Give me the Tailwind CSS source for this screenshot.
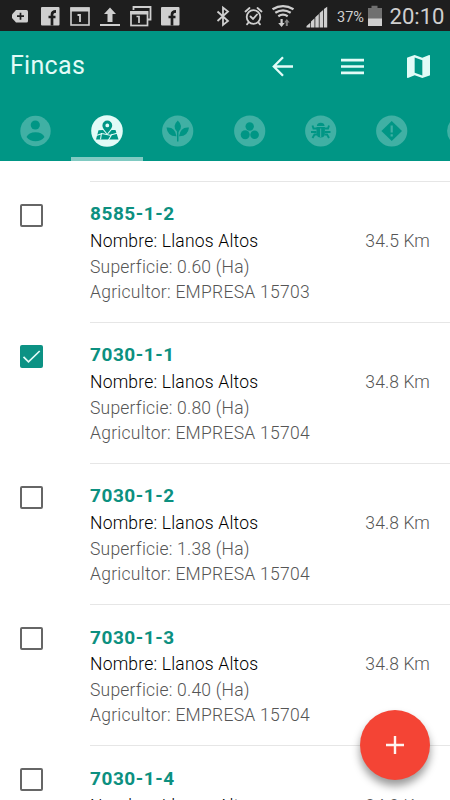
<!DOCTYPE html>
<html lang="es">
<head>
<meta charset="utf-8">
<title>Fincas</title>
<script src="https://cdn.jsdelivr.net/npm/@tailwindcss/browser@4"></script>
</head>
<body class="bg-white">
<div class="relative flex h-[800px] w-[450px] flex-col overflow-hidden bg-white font-['Roboto',sans-serif]">
  <!-- Status bar -->
  <div class="h-[31px] shrink-0 bg-[#1e1e1e]">
    <svg class="block h-[31px] w-[450px]" viewBox="0 0 450 31" fill="#cfcfcf">
      <path d="M16 10h10.500q1.500 0 1.500 1.500v9.500q0 1.500-1.500 1.500H16l-4-4.500v-3.500z"/>
      <path d="M20.500 12.700v7M17 16.200h7" stroke="#1e1e1e" stroke-width="1.700"/>
      <g id="fb"><rect x="41" y="7" width="18.500" height="18.500" rx="1"/><path d="M52 25.500v-11q0-3.200 4-3.200M48.500 17h7" fill="none" stroke="#1e1e1e" stroke-width="2.700"/></g>
      <rect x="71" y="8" width="18" height="17" fill="none" stroke="#cfcfcf" stroke-width="1.600"/><rect x="70.500" y="7.500" width="19" height="4"/>
      <path d="M77.500 15h2.500v7" fill="none" stroke="#cfcfcf" stroke-width="1.800"/>
      <path d="M110 7.500l6 6.500h-3.500v8h-5v-8H104zM100 24h20v2h-20z"/>
      <path d="M133.500 10V7h17V19.500H148" fill="none" stroke="#cfcfcf" stroke-width="1.800"/>
      <rect x="131" y="12" width="16.500" height="13.500" fill="none" stroke="#cfcfcf" stroke-width="1.700"/><rect x="130.200" y="11" width="18" height="3.500"/>
      <path d="M136.500 16.500h2.500v6.500" fill="none" stroke="#cfcfcf" stroke-width="1.700"/>
      <use href="#fb" x="120"/>
      <path d="M217.500 11.500l10.500 9.500-5 4V7.500l5 4-10.500 9.500" fill="none" stroke="#cfcfcf" stroke-width="1.800"/>
      <g fill="none" stroke="#cfcfcf" stroke-width="1.800" stroke-linecap="round">
        <circle cx="253.500" cy="17" r="6.800"/><path d="M250.500 16.500l2.500 2.500 4-4.500M245.500 11.500l4-3.500M261.500 11.500l-4-3.500M248.500 22.500l-1.500 1.800M258.500 22.500l1.500 1.800"/>
      </g>
      <g fill="none" stroke="#cfcfcf" stroke-width="2.300">
        <path d="M272.500 9.300q10.500-6.500 21 0M275.300 12.800q7.700-5 15.400 0M278.300 16.200q4.700-3 9.400 0"/>
      </g>
      <path d="M280.500 19h2.200v4h2L281.600 27l-3.400-4h2.300z"/><path fill="#858585" d="M285.800 26h2v-3.500h1.800L286.800 19l-2.600 3.500h1.600z"/>
      <path d="M306.500 27.500v-1.500l3.800-3.200v4.700zM311 27.500v-6l3.500-3.200v9.200zM315.300 27.500v-10.200l3.500-3.200v13.400zM319.600 27.500v-14.500l3.500-3v17.500zM323.900 27.500V9l3.300-2.300v20.800z"/>
      <path fill="#707070" d="M368 8h3.500V5.800h6V8h4.500v11h-14z"/><path d="M368 18.500h14v7.500h-14z"/>
      <text x="337" y="22" font-size="14.500" textLength="27" lengthAdjust="spacingAndGlyphs">37%</text>
      <text x="389.500" y="24" font-size="22" textLength="55" lengthAdjust="spacingAndGlyphs">20:10</text>
    </svg>
  </div>

  <!-- App bar -->
  <header class="flex h-[130px] shrink-0 flex-col bg-[#009685] text-[#e2fbf7]">
    <div class="flex h-[70px] items-center pl-[10px] pr-[20px]">
      <h1 class="flex-1 text-[25px] leading-[30px] tracking-[0.3px]">Fincas</h1>
      <svg class="mr-[48px] h-[21px] w-[22px]" viewBox="0 0 22 21" fill="none" stroke="currentColor" stroke-width="2.300"><path d="M22 10.500H3M12 1.300l-9.200 9.200 9.200 9.200"/></svg>
      <svg class="mr-[43px] h-[17px] w-[23px]" viewBox="0 0 23 17" fill="currentColor"><path d="M0 .8h23v2.600H0zM0 7.200h23v2.600H0zM0 13.600h23v2.600H0z"/></svg>
      <svg class="h-[23px] w-[23px]" viewBox="3 3 18 18" fill="currentColor"><path d="M20.500 3l-.16.03L15 5.100 9 3 3.360 4.900c-.21.070-.36.250-.36.480V20.500c0 .28.220.5.500.5l.16-.03L9 18.900l6 2.100 5.640-1.900c.21-.07.360-.25.360-.48V3.500c0-.28-.22-.5-.5-.5zM15 19l-6-2.110V5l6 2.110V19z"/></svg>
    </div>
    <nav class="flex h-[60px] overflow-hidden text-[#40b0a4]">
      <div class="flex w-[71.300px] shrink-0 items-center justify-center">
        <svg class="h-[32px] w-[32px]" viewBox="0 0 32 32"><circle cx="15.500" cy="16" r="15.200" fill="currentColor"/><g fill="#009685"><circle cx="15.300" cy="10" r="4.600"/><path d="M6.500 22q2-4.800 9-4.800t9 4.800q-3.500 4.300-9 4.300T6.500 22z"/></g></svg>
      </div>
      <div class="flex w-[71.300px] shrink-0 items-center justify-center border-b-4 border-[#80cac2] pt-1 text-[#e2fbf7]">
        <svg class="h-[32px] w-[32px]" viewBox="0 0 32 32"><circle cx="16" cy="16" r="15.800" fill="currentColor"/><g fill="#009685"><path fill-rule="evenodd" d="M16.300 5.500a4.900 4.900 0 0 1 4.900 4.900c0 3-2.700 5-4.900 8.300-2.200-3.300-4.900-5.300-4.900-8.300a4.900 4.900 0 0 1 4.900-4.900zm0 3a1.900 1.900 0 1 0 0 3.800 1.900 1.900 0 0 0 0-3.800z"/><path d="M7.500 15.200l4.500-.2 4.300 5 4.300-5h3.900l3 9.500H5z"/></g><path d="M6 20.200l5-1.700 8 1.800 7-2M10.500 18l-1 6.500M17.500 25l3.500-6" fill="none" stroke="currentColor" stroke-width="1.100"/></svg>
      </div>
      <div class="flex w-[71.300px] shrink-0 items-center justify-center">
        <svg class="h-[32px] w-[32px]" viewBox="0 0 32 32"><circle cx="15.700" cy="16" r="15.600" fill="currentColor"/><g fill="#009685"><path d="M15.800 5.500q6.500 6 .5 11.500h-1q-6-5.500.5-11.500z"/><path d="M4.500 12.500q8.500-1 10 8.700Q5.500 21.500 4.500 12.500zM27 12.500q-8.500-1-10 8.700Q26 21.500 27 12.500z"/><path d="M15 16h1.500v10.500H15z"/></g></svg>
      </div>
      <div class="flex w-[71.300px] shrink-0 items-center justify-center">
        <svg class="h-[32px] w-[32px]" viewBox="0 0 32 32"><circle cx="15.700" cy="16" r="15.600" fill="currentColor"/><g fill="#009685"><circle cx="15.700" cy="11.500" r="4.200"/><circle cx="11.200" cy="19.800" r="4.500"/><circle cx="20.600" cy="19.800" r="4.300"/></g></svg>
      </div>
      <div class="flex w-[71.300px] shrink-0 items-center justify-center">
        <svg class="h-[32px] w-[32px]" viewBox="0 0 32 32"><circle cx="15.700" cy="16" r="15.600" fill="currentColor"/><g fill="#009685"><path d="M11.800 11q.4-3.300 3.900-3.300t3.900 3.300z"/><path d="M11.500 12h8.400v6q0 4.500-4.200 4.500T11.500 18z"/></g><path d="M12 13.500H8.500L7.500 10.500M19.500 13.500h3.500l1-3M11.500 17H6M20 17h5.500M12 19.500H9.500l-2 3.500M19.500 19.500H22l2 3.500" fill="none" stroke="#009685" stroke-width="1.900"/><path d="M15.700 13.500v8.500" stroke="currentColor" stroke-width="1"/></svg>
      </div>
      <div class="flex w-[71.300px] shrink-0 items-center justify-center">
        <svg class="h-[32px] w-[32px]" viewBox="0 0 32 32"><circle cx="15.700" cy="16" r="15.600" fill="currentColor"/><path fill="#009685" d="M15.700 6L26 16 15.700 26 5.400 16z"/><path d="M14.600 10.500h2.200v7h-2.200zM14.600 19.300h2.200v2.200h-2.200z" fill="currentColor"/></svg>
      </div>
      <div class="flex w-[71.300px] shrink-0 items-center justify-center">
        <svg class="h-[32px] w-[32px]" viewBox="0 0 32 32"><circle cx="15.700" cy="16" r="15.600" fill="currentColor"/></svg>
      </div>
    </nav>
  </header>

  <!-- List -->
  <main id="list" class="flex flex-col pt-[19.600px]"></main>

  <button class="absolute left-[360px] top-[710px] flex h-[70px] w-[70px] items-center justify-center rounded-full bg-[#f44435] shadow-[0_6px_9px_rgba(0,0,0,0.4)]" aria-label="Agregar">
    <svg class="h-[18px] w-[18px]" viewBox="0 0 18 18" fill="none" stroke="#fff4f0" stroke-width="2.400"><path d="M9 0v18M0 9h18"/></svg>
  </button>
</div>
<script>
const farms = [
  ['8585-1-2', '0.60', '15703', '34.5', false],
  ['7030-1-1', '0.80', '15704', '34.8', true],
  ['7030-1-2', '1.38', '15704', '34.8', false],
  ['7030-1-3', '0.40', '15704', '34.8', false],
  ['7030-1-4', '0.40', '15704', '34.8', false],
];
const empty = '<span class="block h-[23px] w-[23px] rounded-[2px] border-[2px] border-[#666]"></span>';
const checked = '<span class="block h-[23px] w-[23px] rounded-[2px] bg-[#0c9284]"><svg class="block h-[23px] w-[23px]" viewBox="0 0 23 23" fill="none" stroke="#e2fbf7" stroke-width="1.700"><path d="M3.500 11.800l5 5L19.700 6"/></svg></span>';
document.getElementById('list').innerHTML = farms.map(([id, area, company, km, on]) => `
  <article class="flex h-[141.200px] shrink-0 pl-[20px]">
    <div class="w-[70px] shrink-0 pt-[23px]">${on ? checked : empty}</div>
    <div class="flex flex-1 flex-col whitespace-nowrap border-t border-[#e6e6e6] pr-[20px] pt-[18.500px]">
      <h2 class="text-[19px] font-bold leading-[27px] tracking-[0.550px] text-[#0c9080]">${id}</h2>
      <p class="mt-[0.700px] flex justify-between text-[17.500px] font-light leading-[26px] text-black"><span class="tracking-[0.200px]">Nombre: Llanos Altos</span><span class="tracking-[0.100px] text-[#555]">${km} Km</span></p>
      <p class="text-[17.500px] font-light leading-[26px] tracking-[0.220px] text-[#555]">Superficie: ${area} (Ha)</p>
      <p class="text-[17.500px] font-light leading-[25px] tracking-[0.270px] text-[#555]">Agricultor: EMPRESA ${company}</p>
    </div>
  </article>`).join('');
</script>
</body>
</html>
